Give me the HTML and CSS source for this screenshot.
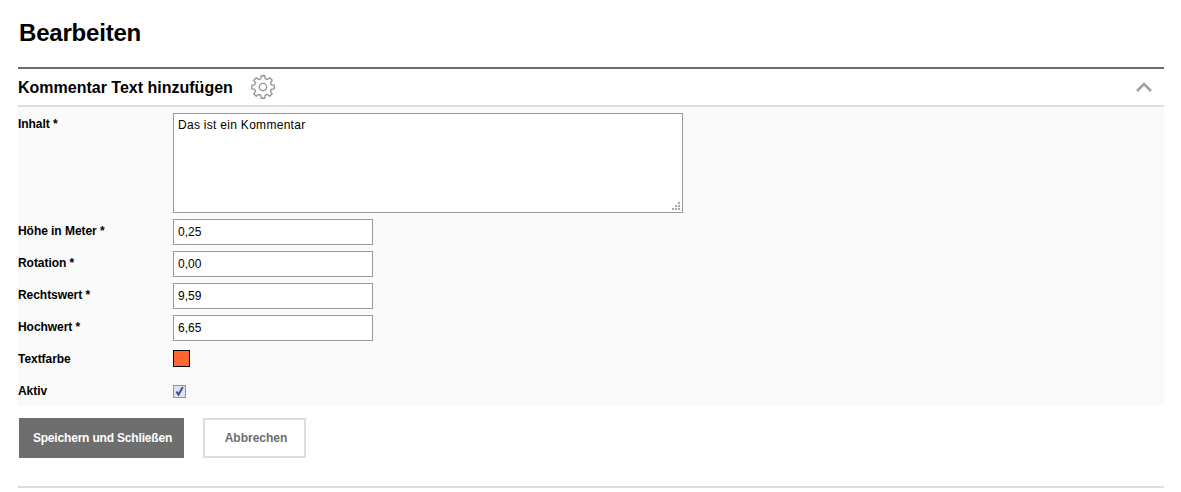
FILE: index.html
```html
<!DOCTYPE html>
<html lang="de">
<head>
<meta charset="utf-8">
<title>Bearbeiten</title>
<link rel="stylesheet" href="styles.css">
</head>
<body>
  <h1 class="page_title">Bearbeiten</h1>
  <div class="panel">
    <div class="panel_head">
      <h2 class="panel_title">Kommentar Text hinzufügen</h2>
      <svg class="gear" viewBox="0 0 24 24" width="26" height="26" fill="none" stroke="#929292" stroke-width="1.2" stroke-linejoin="round">
        <path d="M10.06 4.24L10.36 1.63H13.64L13.94 4.24L16.12 5.14L18.17 3.51L20.49 5.83L18.86 7.88L19.76 10.06L22.37 10.36V13.64L19.76 13.94L18.86 16.12L20.49 18.17L18.17 20.49L16.12 18.86L13.94 19.76L13.64 22.37H10.36L10.06 19.76L7.88 18.86L5.83 20.49L3.51 18.17L5.14 16.12L4.24 13.94L1.63 13.64V10.36L4.24 10.06L5.14 7.88L3.51 5.83L5.83 3.51L7.88 5.14z"/>
        <circle cx="12" cy="12" r="3.4"/>
      </svg>
      <svg class="chevron" viewBox="0 0 16 10" width="16" height="10" fill="none" stroke="#a0a0a0" stroke-width="2.6">
        <path d="M1 9l7-7 7 7"/>
      </svg>
    </div>
    <form class="panel_form">
      <label class="field_label field_label_top">Inhalt *</label>
      <div class="area_wrap">
        <textarea class="field_area">Das ist ein Kommentar</textarea>
        <svg class="grip" viewBox="0 0 8 8" width="8" height="8" fill="#a8a8a8">
          <rect x="6" y="0" width="2" height="2"/>
          <rect x="3" y="3" width="2" height="2"/>
          <rect x="6" y="3" width="2" height="2"/>
          <rect x="0" y="6" width="2" height="2"/>
          <rect x="3" y="6" width="2" height="2"/>
          <rect x="6" y="6" width="2" height="2"/>
        </svg>
      </div>
      <label class="field_label">Höhe in Meter *</label>
      <input class="field_input" type="text" value="0,25">
      <label class="field_label">Rotation *</label>
      <input class="field_input" type="text" value="0,00">
      <label class="field_label">Rechtswert *</label>
      <input class="field_input" type="text" value="9,59">
      <label class="field_label">Hochwert *</label>
      <input class="field_input" type="text" value="6,65">
      <label class="field_label">Textfarbe</label>
      <span class="swatch"></span>
      <label class="field_label">Aktiv</label>
      <svg class="check" viewBox="0 0 13 13" width="13" height="13">
        <rect x="0.5" y="0.5" width="12" height="12" fill="#dfe2ec" stroke="#94949c"/>
        <path d="M3.5 6.5l2 3.2L9.8 2" fill="none" stroke="#34479a" stroke-width="1.8"/>
      </svg>
    </form>
  </div>
  <div class="actions">
    <button class="button button_save" type="button">Speichern und Schließen</button>
    <button class="button button_cancel" type="button">Abbrechen</button>
  </div>
  <div class="foot_line"></div>
</body>
</html>
```

FILE: styles.css
```css
body {
  margin: 0;
  padding: 0 17px 0 18px;
  font-family: "Liberation Sans", Arial, sans-serif;
  font-size: 12px;
  background: #ffffff;
  color: #000000;
}

.page_title {
  margin: 0;
  padding: 19px 0 20px 1px;
  font-size: 24px;
  line-height: 28px;
  font-weight: bold;
  letter-spacing: -0.2px;
}

.panel_head {
  display: flex;
  align-items: center;
  height: 36px;
  border-top: 2px solid #6e6e6e;
  border-bottom: 2px solid #dedede;
}

.panel_title {
  margin: 0;
  padding-top: 1px;
  font-size: 16px;
  font-weight: bold;
}

.gear {
  margin-left: 17px;
}

.chevron {
  margin-left: auto;
  margin-right: 12px;
}

.panel_form {
  display: grid;
  grid-template-columns: 155px 1fr;
  row-gap: 6px;
  padding: 6px 0 1px;
  background: #fafafa;
}

.field_label {
  padding-top: 5px;
  font-weight: bold;
  line-height: 14px;
  letter-spacing: -0.05px;
}

.field_label_top {
  padding-top: 4px;
}

.area_wrap {
  position: relative;
  width: 510px;
  height: 100px;
}

.field_area {
  display: block;
  box-sizing: border-box;
  width: 510px;
  height: 100px;
  margin: 0;
  padding: 4px;
  border: 1px solid #999999;
  background: #ffffff;
  font-family: inherit;
  font-size: 12px;
  line-height: 14px;
  letter-spacing: 0.29px;
  resize: none;
}

.grip {
  position: absolute;
  right: 3px;
  bottom: 3px;
}

.field_input {
  display: block;
  box-sizing: border-box;
  width: 200px;
  height: 26px;
  margin: 0;
  padding: 0 4px;
  border: 1px solid #999999;
  background: #ffffff;
  font-family: inherit;
  font-size: 12px;
}

.swatch {
  display: block;
  box-sizing: border-box;
  width: 17px;
  height: 17px;
  margin: 3px 0 6px;
  border: 1px solid #000000;
  background: #ff6633;
}

.check {
  display: block;
  margin: 6px 0 7px;
}

.actions {
  display: flex;
  gap: 19px;
  padding: 12px 0 28px 1px;
}

.button {
  box-sizing: border-box;
  height: 40px;
  margin: 0;
  padding: 0 0 0 2px;
  font-family: inherit;
  font-size: 12px;
  font-weight: bold;
}

.button_save {
  width: 165px;
  border: 0;
  background: #6e6e6e;
  color: #ffffff;
  letter-spacing: -0.18px;
}

.button_cancel {
  width: 103px;
  border: 2px solid #dedede;
  padding-left: 3px;
  background: #ffffff;
  color: #6e6e6e;
}

.foot_line {
  border-top: 2px solid #dedede;
}
```
